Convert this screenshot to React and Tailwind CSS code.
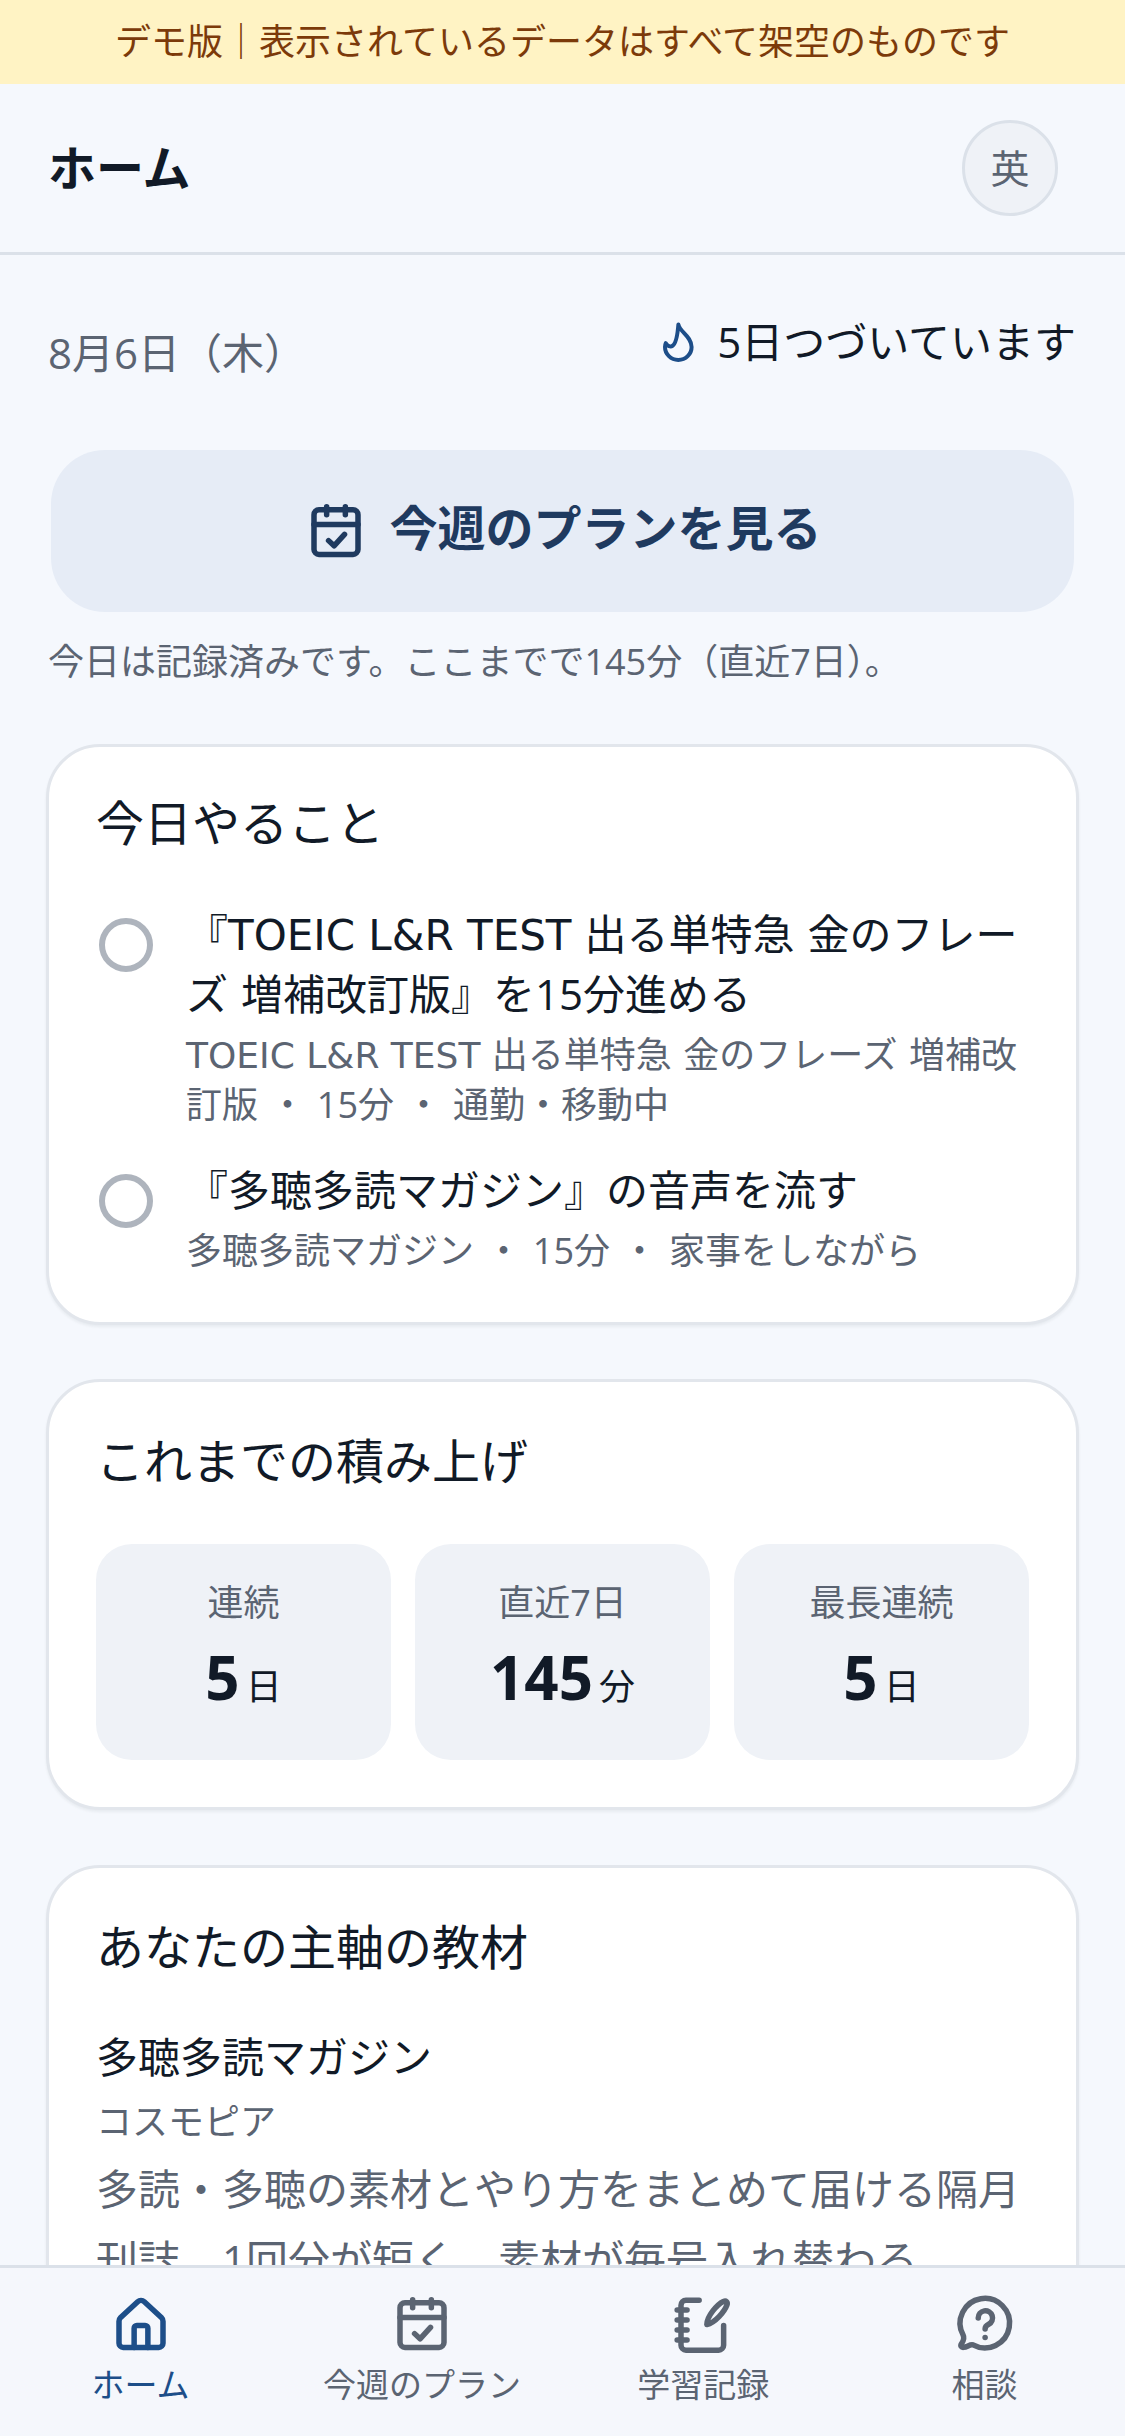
const NAV_ITEMS = [
  { label: 'ホーム', icon: HomeIcon, active: true },
  { label: '今週のプラン', icon: CalendarIcon },
  { label: '学習記録', icon: NotebookIcon },
  { label: '相談', icon: HelpIcon },
];

const STATS = [
  { label: '連続', value: '5', unit: '日' },
  { label: '直近7日', value: '145', unit: '分' },
  { label: '最長連続', value: '5', unit: '日' },
];

// the book title's latin part is wider than the body font
const Latin = ({ children }) => (
  <span className="font-['DejaVu_Sans'] [word-spacing:0]">{children}</span>
);

const TASKS = [
  {
    id: 'kin-phrase',
    title: <>『<Latin>TOEIC L&amp;R TEST</Latin> 出る単特急 金のフレーズ 増補改訂版』を15分進める</>,
    meta: <><Latin>TOEIC L&amp;R TEST</Latin> 出る単特急 金のフレーズ 増補改訂版 ・ 15分 ・ 通勤・移動中</>,
  },
  {
    id: 'tacho-magazine',
    title: '『多聴多読マガジン』の音声を流す',
    meta: '多聴多読マガジン ・ 15分 ・ 家事をしながら',
  },
];

function Icon({ size = 66, children, className }) {
  return (
    <svg
      width={size}
      height={size}
      viewBox="0 0 24 24"
      fill="none"
      stroke="currentColor"
      strokeWidth="2"
      strokeLinecap="round"
      strokeLinejoin="round"
      className={className}
    >
      {children}
    </svg>
  );
}

function HomeIcon() {
  return (
    <Icon>
      <path d="M4 11a2 2 0 0 1 .6-1.4l6.2-5.7a1.800 1.800 0 0 1 2.400 0l6.200 5.700A2 2 0 0 1 20 11v8a1.500 1.500 0 0 1-1.500 1.500h-13A1.500 1.500 0 0 1 4 19z" />
      <path d="M9.500 20.500v-7a1 1 0 0 1 1-1h3a1 1 0 0 1 1 1v7" />
    </Icon>
  );
}

function CalendarIcon() {
  return (
    <Icon>
      <rect x="4" y="4.3" width="16" height="16.2" rx="1.8" />
      <path d="M4 9.6h16M8.600 3.200v2.900M15.400 3.200v2.900" />
      <path d="M9.300 15.500l2 1.900 3.800-4.200" />
    </Icon>
  );
}

function NotebookIcon() {
  return (
    <Icon>
      <path d="M10.600 3.400H5.800A1.800 1.800 0 0 0 4 5.200v14.500a1.800 1.800 0 0 0 1.800 1.800h11.900a1.800 1.800 0 0 0 1.800-1.800v-7.200" />
      <path d="M2.600 6.900h3.600M2.600 10.500h3.600M2.600 14.200h3.600M2.600 17.800h3.600" />
      <path d="M13.400 12.200c0-3 3.800-7.400 6-8.400 1-.4 1.700.2 1.300 1.300-.9 2.400-4.300 6.500-7.300 7.100z" />
    </Icon>
  );
}

function HelpIcon() {
  return (
    <Icon>
      <path d="M8 19.600a9 9 0 1 0-3.600-3.600c.5 1 .1 2.200-.6 3.200-.5.800 0 1.400.8 1.300 1.300-.1 2.400-1.300 3.400-.9z" />
      <path d="M9.900 9.800a2.600 2.600 0 1 1 3.800 2.300c-.8.4-1.300 1-1.300 1.700" />
      <path d="M12.400 16.900h.01" />
    </Icon>
  );
}

function FlameIcon() {
  return (
    <Icon size={48} className="shrink-0 text-[#1d4e89]">
      <path d="M12.200 3.200c.3 3.500 6.600 5.800 6.600 11.300a6.650 6.500 0 0 1-13.300 0c0-.7.1-1.300.4-1.900.8 1.400 2.300 2 3.400 1.300 1.800-1.200 2.500-5.600 2.900-10.700z" />
    </Icon>
  );
}

function Card({ title, children, className }) {
  return (
    <section className={`-mx-[2px] rounded-[54px] border-[3px] border-[#e2e6ec] bg-white px-[47px] shadow-[0_2px_3px_rgba(15,27,42,0.06)] ${className}`}>
      <h2 className="text-[48px] leading-[67px] font-normal text-[#111a27]">{title}</h2>
      {children}
    </section>
  );
}

export default function App() {
  return (
    <div className="flex h-[2436px] flex-col overflow-hidden bg-[#f5f8fd] font-['Open_Sans','Noto_Sans_CJK_JP',sans-serif] text-[#111a27]">
      <div className="flex h-[84px] shrink-0 items-center justify-center bg-[#fff3c4] text-[36px] text-[#7c3a0a]">
        デモ版｜表示されているデータはすべて架空のものです
      </div>

      <header className="flex h-[171px] shrink-0 items-center justify-between border-b-[3px] border-[#dbe1e9] pl-[48px] pr-[67px]">
        <h1 className="text-[48px] font-bold">ホーム</h1>
        <div className="flex h-[96px] w-[96px] items-center justify-center rounded-full border-[3px] border-[#dbe1e9] bg-[#eff2f7] text-[39px] text-[#5b6472]">
          英
        </div>
      </header>

      <main className="min-h-0 flex-1 overflow-hidden px-[48px] pt-[57px]">
        <div className="mb-[68px] flex items-start justify-between">
          <p className="pt-[11px] text-[42px] leading-[59px] text-[#5b6472]">8月6日（木）</p>
          <div className="flex items-center gap-[15px] pr-[1px] text-[42px] leading-[59px]">
            <FlameIcon />
            <span>5日つづいています</span>
          </div>
        </div>

        <button className="mx-[3px] flex h-[162px] w-[1023px] items-center justify-center gap-[20px] rounded-[54px] bg-[#e6ecf6] text-[48px] font-bold text-[#1f3a5f]">
          <CalendarIcon />
          <span className="pb-[6px]">今週のプランを見る</span>
        </button>
        <p className="mt-[25px] text-[36px] leading-[50px] text-[#5b6472]">
          今日は記録済みです。ここまでで145分（直近7日）。
        </p>

        <Card title="今日やること" className="mt-[57px] pt-[42px] pb-[47px]">
          <ul className="mt-[49px] flex flex-col gap-[32px] [word-spacing:0.13em]">
            {TASKS.map(task => (
              <li key={task.id} className="flex items-start gap-[33px] pl-[3px]">
                <span className="mt-[13px] h-[54px] w-[54px] shrink-0 rounded-full border-[6px] border-[#aeb4bd]" />
                <div>
                  <p className="text-[42px] leading-[58px]">{task.title}</p>
                  <p className="mt-[7px] text-[36px] leading-[49px] text-[#5b6472]">{task.meta}</p>
                </div>
              </li>
            ))}
          </ul>
        </Card>

        <Card title="これまでの積み上げ" className="mt-[54px] pt-[45px] pb-[47px]">
          <div className="mt-[50px] grid grid-cols-3 gap-[24px]">
            {STATS.map(stat => (
              <div key={stat.label} className="flex h-[216px] flex-col items-center rounded-[36px] bg-[#eff2f7] pt-[34px]">
                <span className="text-[36px] leading-[50px] text-[#5b6472]">{stat.label}</span>
                <span className="mt-[7px] text-[36px] leading-[84px]">
                  <b className="mr-[6px] text-[60px] font-bold">{stat.value}</b>
                  {stat.unit}
                </span>
              </div>
            ))}
          </div>
        </Card>

        <Card title="あなたの主軸の教材" className="mt-[55px] pt-[45px] pb-[47px]">
          <p className="mt-[47px] text-[42px] leading-[59px]">多聴多読マガジン</p>
          <p className="mt-[11px] text-[36px] leading-[50px] text-[#5b6472]">コスモピア</p>
          <p className="mt-[6px] text-[42px] leading-[71px] text-[#5b6472]">
            多読・多聴の素材とやり方をまとめて届ける隔月刊誌。1回分が短く、素材が毎号入れ替わる。
          </p>
        </Card>
      </main>

      <nav className="grid h-[171px] shrink-0 grid-cols-4 border-t-[3px] border-[#dbe1e9] bg-[#f5f7fc] pt-[23px]">
        {NAV_ITEMS.map(({ label, icon: NavIcon, active }) => (
          <div key={label} className={`flex flex-col items-center gap-[5px] ${active ? 'text-[#1d4e89]' : 'text-[#5b6472]'}`}>
            <NavIcon />
            <span className="text-[33px] leading-[46px]">{label}</span>
          </div>
        ))}
      </nav>
    </div>
  );
}
